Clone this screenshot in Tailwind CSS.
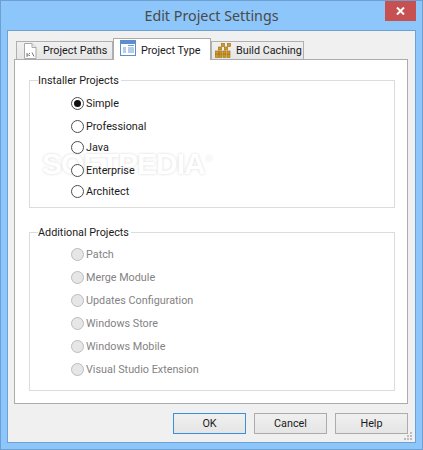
<!DOCTYPE html>
<html><head><meta charset="utf-8"><script src="https://cdn.jsdelivr.net/npm/@tailwindcss/browser@4"></script></head>
<body class="m-0">
<div class="relative w-[423px] h-[450px] overflow-hidden bg-[#8cc6fa] border border-[#6f9fd0] font-['Roboto',sans-serif] text-[10.8px] text-[#1a1a1a] flex flex-col">
  <div class="h-[29px] shrink-0 flex items-center justify-center font-['Noto_Sans',sans-serif] text-[14.3px] text-[#4a4a48]">Edit Project Settings</div>
  <div class="absolute right-[6px] top-0 w-[31px] h-[20px] bg-[#c75050] flex items-center justify-center">
    <svg width="9" height="8" viewBox="0 0 9 8"><path d="M1 0.5L8 7.5M8 0.5L1 7.5" stroke="#fff" stroke-width="2"/></svg>
  </div>
  <div class="relative ml-[6px] w-[409px] h-[413px] border border-[#6ea0d2] bg-[#f0f0f0] flex flex-col">
    <div class="pl-[6px] flex flex-col">
      <div class="h-[28px] flex items-end pl-[2px] relative z-10">
        <div class="w-[97px] h-[18px] border border-b-0 border-[#b0b0b0] bg-gradient-to-b from-[#f0f0f0] to-[#e6e6e6] flex items-center whitespace-nowrap">
          <svg class="ml-[6px]" width="14" height="16" viewBox="0 0 14 16"><path d="M1.5 .5H9L13 4.5V15.5H1.5Z" fill="#fff" stroke="#a8a8a8"/><path d="M9 .5V4.5H13" fill="#eee" stroke="#a8a8a8"/><path d="M3 11h2v2H3M6 10.5h1M6 12.5h1M9 9.5l2 4" stroke="#777" stroke-width="1" fill="none"/></svg>
          <span class="ml-[6px] pt-[2px]">Project Paths</span>
        </div>
        <div class="w-[98px] h-[22px] -mb-[1px] border border-b-0 border-[#ababab] bg-white flex items-start whitespace-nowrap">
          <svg class="ml-[6px] mt-[1px]" width="16" height="16" viewBox="0 0 16 16"><rect x=".5" y=".5" width="15" height="15" fill="#fff" stroke="#5d8fcf"/><rect x="1" y="1" width="14" height="3" fill="#5d8fcf"/><path d="M8 5.5h6M3 8h3M8 8h6M3 10h3M8 10h6M3 12h3M8 12h6" stroke="#6f9bd3" stroke-width="1"/></svg>
          <span class="ml-[5px] mt-[4px]">Project Type</span>
        </div>
        <div class="w-[93px] h-[18px] border border-b-0 border-[#b0b0b0] bg-gradient-to-b from-[#f0f0f0] to-[#e6e6e6] flex items-center whitespace-nowrap">
          <svg class="ml-[3px]" width="16" height="15" viewBox="0 0 16 15"><g fill="#d59a1c" stroke="#9a6a10" stroke-width=".6"><rect x="6.5" y=".5" width="3" height="3"/><rect x="12.5" y=".5" width="3" height="3"/><rect x="3.5" y="4" width="3" height="3"/><rect x="9.5" y="4" width="3" height="3"/><rect x=".5" y="8" width="3" height="3"/><rect x="4" y="8" width="3" height="3"/><rect x="8" y="8" width="3" height="3"/><rect x="12" y="8" width="3" height="3"/><rect x=".5" y="11.5" width="3" height="3"/><rect x="4" y="11.5" width="3" height="3"/><rect x="8" y="11.5" width="3" height="3"/><rect x="12" y="11.5" width="3" height="3"/></g></svg>
          <span class="ml-[5px] pt-[2px]">Build Caching</span>
        </div>
      </div>
      <div class="relative w-[394px] h-[345px] border border-[#acacac] bg-white px-[14px] pt-[20px] flex flex-col">
        <div class="absolute left-[27px] top-[87px] text-[30px] font-['Liberation_Sans',sans-serif] font-bold tracking-[-1px] text-white leading-[34px] [text-shadow:0_0_3px_rgba(0,0,0,.16)]">SOFTPEDIA<sup class="text-[9px] font-normal tracking-[0px] ml-[1px] -top-[12px]">®</sup></div>
        <fieldset class="relative z-10 w-[366px] h-[128px] border border-[#dcdcdc]">
          <div class="absolute left-[8px] -top-[8px] bg-white pr-[2px] leading-[16px]">Installer Projects</div>
          <div class="pl-[41px] pt-[14px] flex flex-col">
            <div class="h-[16px] flex items-center gap-[2px]"><span class="w-[13px] h-[13px] rounded-full border border-[#4d4d4d] bg-white flex items-center justify-center"><span class="w-[7px] h-[7px] rounded-full bg-[#111]"></span></span><span class="pt-[2px]">Simple</span></div>
            <div class="mt-[7px] h-[16px] flex items-center gap-[2px]"><span class="w-[13px] h-[13px] rounded-full border border-[#4d4d4d] bg-white"></span><span class="pt-[2px]">Professional</span></div>
            <div class="mt-[5px] h-[16px] flex items-center gap-[2px]"><span class="w-[13px] h-[13px] rounded-full border border-[#4d4d4d] bg-white"></span><span class="pt-[2px]">Java</span></div>
            <div class="mt-[7px] h-[16px] flex items-center gap-[2px]"><span class="w-[13px] h-[13px] rounded-full border border-[#4d4d4d] bg-white"></span><span class="pt-[2px]">Enterprise</span></div>
            <div class="mt-[5px] h-[16px] flex items-center gap-[2px]"><span class="w-[13px] h-[13px] rounded-full border border-[#4d4d4d] bg-white"></span><span class="pt-[2px]">Architect</span></div>
          </div>
        </fieldset>
        <fieldset class="relative mt-[24px] w-[366px] h-[159px] border border-[#dcdcdc]">
          <div class="absolute left-[8px] -top-[8px] bg-white pr-[2px] leading-[16px]">Additional Projects</div>
          <div class="pl-[41px] pt-[13px] flex flex-col gap-[7px] text-[#838383]">
            <div class="h-[16px] flex items-center gap-[2px]"><span class="w-[13px] h-[13px] rounded-full border border-[#bcbcbc] bg-[#e6e6e6]"></span><span class="pt-[2px]">Patch</span></div>
            <div class="h-[16px] flex items-center gap-[2px]"><span class="w-[13px] h-[13px] rounded-full border border-[#bcbcbc] bg-[#e6e6e6]"></span><span class="pt-[2px]">Merge Module</span></div>
            <div class="h-[16px] flex items-center gap-[2px]"><span class="w-[13px] h-[13px] rounded-full border border-[#bcbcbc] bg-[#e6e6e6]"></span><span class="pt-[2px]">Updates Configuration</span></div>
            <div class="h-[16px] flex items-center gap-[2px]"><span class="w-[13px] h-[13px] rounded-full border border-[#bcbcbc] bg-[#e6e6e6]"></span><span class="pt-[2px]">Windows Store</span></div>
            <div class="h-[16px] flex items-center gap-[2px]"><span class="w-[13px] h-[13px] rounded-full border border-[#bcbcbc] bg-[#e6e6e6]"></span><span class="pt-[2px]">Windows Mobile</span></div>
            <div class="h-[16px] flex items-center gap-[2px]"><span class="w-[13px] h-[13px] rounded-full border border-[#bcbcbc] bg-[#e6e6e6]"></span><span class="pt-[2px]">Visual Studio Extension</span></div>
          </div>
        </fieldset>
      </div>
    </div>
    <div class="flex justify-end gap-[8px] pr-[7px] mt-[9px]">
      <div class="w-[73px] h-[21px] pt-[2px] border border-[#3a8fe0] bg-gradient-to-b from-[#f0f0f0] to-[#e5e5e5] flex items-center justify-center">OK</div>
      <div class="w-[73px] h-[21px] pt-[2px] border border-[#acacac] bg-gradient-to-b from-[#f0f0f0] to-[#e5e5e5] flex items-center justify-center">Cancel</div>
      <div class="w-[73px] h-[21px] pt-[2px] border border-[#acacac] bg-gradient-to-b from-[#f0f0f0] to-[#e5e5e5] flex items-center justify-center">Help</div>
    </div>
    <svg class="absolute right-[2px] bottom-[1px]" width="9" height="9" viewBox="0 0 9 9"><path d="M6 0h2v2H6zM3 3h2v2H3zM6 3h2v2H6zM0 6h2v2H0zM3 6h2v2H3zM6 6h2v2H6z" fill="#bdbdbd"/></svg>
  </div>
</div>
</body></html>
